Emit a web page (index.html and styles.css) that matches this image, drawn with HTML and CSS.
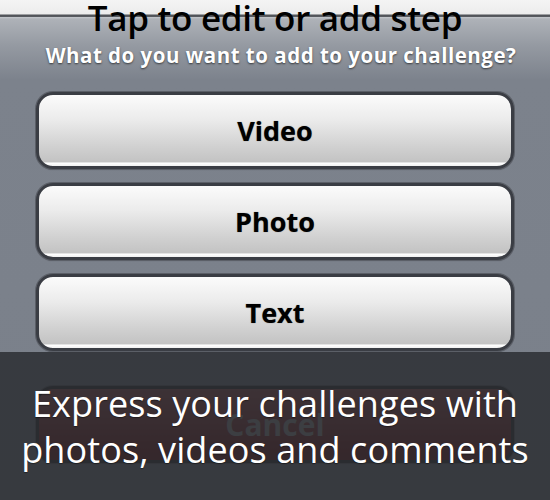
FILE: index.html
```html
<!DOCTYPE html>
<html>
<head>
<meta charset="utf-8">
<link rel="stylesheet" href="styles.css">
</head>
<body>
<div class="screen">
  <header class="header">
    <h1 class="title">Tap to edit or add step</h1>
    <p class="subtitle">What do you want to add to your challenge?</p>
  </header>
  <div class="choices">
    <button class="btn">Video</button>
    <button class="btn">Photo</button>
    <button class="btn">Text</button>
    <button class="btn cancel">Cancel</button>
  </div>
  <div class="caption">
    <p>Express your challenges with<br>photos, videos and comments</p>
  </div>
</div>
</body>
</html>
```
FILE: styles.css
```css
* { box-sizing: border-box; }
html, body { margin: 0; padding: 0; }
body {
  width: 550px;
  height: 500px;
  overflow: hidden;
  font-family: "Open Sans", "DejaVu Sans", sans-serif;
  background: #7a808a;
}
.screen {
  position: relative;
  width: 550px;
  height: 500px;
  background:
    linear-gradient(to bottom,
      #f4f4f4 0, #ececec 14px,
      #4e5156 15px, #5a5d62 17px,
      #c4c7cc 17px, #aeb2b8 19px,
      #959aa2 45px, #7c828c 80px, #7a808a 100%);
}
.header {
  display: flex;
  flex-direction: column;
  align-items: center;
  height: 87px;
}
.title {
  margin: 0;
  margin-top: -6px;
  font-weight: 600;
  font-size: 35px;
  line-height: 47px;
  color: #000;
  letter-spacing: -0.3px;
}
.subtitle {
  margin: 0;
  margin-top: 0;
  padding-left: 12px;
  font-weight: 700;
  font-size: 20.5px;
  line-height: 28px;
  color: #fff;
  letter-spacing: 0.5px;
  text-shadow: 0 1px 2px rgba(0,0,0,0.6);
}
.choices {
  display: flex;
  flex-direction: column;
  gap: 14px;
  padding: 5px 36px 0 36px;
}
.btn {
  height: 77px;
  width: 100%;
  border: 3px solid #3a3d44;
  border-radius: 17px;
  background: linear-gradient(to bottom, #fbfbfb 0%, #ebebeb 35%, #cfcfcf 75%, #c3c3c3 94%, #ffffff 96%, #f0f0f0 100%);
  box-shadow: 0 0 0 1px #5b5f67, 0 1px 1px rgba(0,0,0,0.3);
  font-family: "Open Sans", "DejaVu Sans", sans-serif;
  font-weight: 700;
  font-size: 27px;
  color: #000;
  padding: 0;
  text-shadow: 0 0 1px rgba(0,0,0,0.5);
}
.btn.cancel {
  margin-top: 21px;
  border-color: #1e1f22;
  background: linear-gradient(to bottom, #a04848 0%, #8a2a2a 40%, #720808 80%, #6a0000 100%);
  color: #9a9a9a;
  font-size: 30px;
  text-shadow: none;
}
.caption {
  position: absolute;
  left: 0;
  top: 352px;
  width: 550px;
  height: 148px;
  background: rgba(44, 47, 51, 0.86);
  display: flex;
  justify-content: center;
}
.caption p {
  margin: 0;
  margin-top: 29px;
  text-align: center;
  color: #fff;
  font-size: 36px;
  line-height: 46px;
  letter-spacing: 0.1px;
  white-space: nowrap;
  text-shadow: 0 1px 1px rgba(0,0,0,0.4);
}
```
